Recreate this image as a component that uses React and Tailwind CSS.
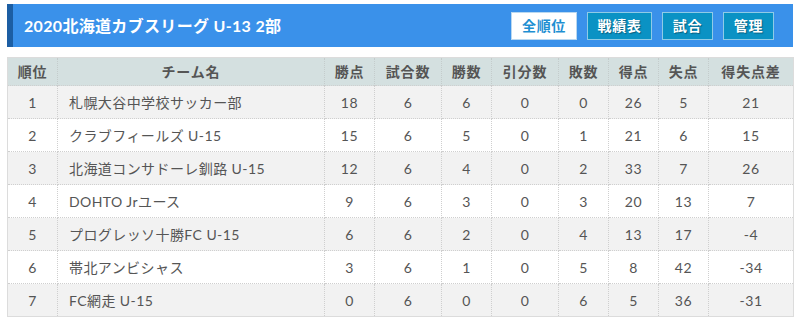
import React from "react";

const rows = [
  [1, "札幌大谷中学校サッカー部", 18, 6, 6, 0, 0, 26, 5, 21],
  [2, "クラブフィールズ U-15", 15, 6, 5, 0, 1, 21, 6, 15],
  [3, "北海道コンサドーレ釧路 U-15", 12, 6, 4, 0, 2, 33, 7, 26],
  [4, "DOHTO Jrユース", 9, 6, 3, 0, 3, 20, 13, 7],
  [5, "プログレッソ十勝FC U-15", 6, 6, 2, 0, 4, 13, 17, -4],
  [6, "帯北アンビシャス", 3, 6, 1, 0, 5, 8, 42, -34],
  [7, "FC網走 U-15", 0, 6, 0, 0, 6, 5, 36, -31],
];

const heads = ["順位", "チーム名", "勝点", "試合数", "勝数", "引分数", "敗数", "得点", "失点", "得失点差"];
const widths = [50, 267, 50, 67, 50, 67, 50, 50, 50, 85];

export default function App() {
  return (
    <div className="w-[800px] h-[325px] bg-white font-[Lato,'Noto_Sans_CJK_JP',sans-serif] pt-[4px]">
      <div className="mx-[7px] h-[43px] bg-[#3a91ea] border-l-[6px] border-[#1c5ea3] flex items-center justify-between pl-[11px] pr-[19px]">
        <div className="text-white font-bold text-[16px] tracking-[0.02em]">2020北海道カブスリーグ U-13 2部</div>
        <div className="flex gap-[10px]">
          <div className="w-[66px] h-[28px] bg-white border border-[#b9d8f0] flex items-center justify-center text-[#1e8fd2] font-bold text-[14px] tracking-[0.05em]">全順位</div>
          <div className="w-[65px] h-[28px] bg-[#0a92c4] border border-[#8fcbe6] flex items-center justify-center text-white font-bold text-[14px] tracking-[0.05em] [text-shadow:1px_1px_1px_rgba(0,0,0,0.35)]">戦績表</div>
          <div className="w-[51px] h-[28px] bg-[#0a92c4] border border-[#8fcbe6] flex items-center justify-center text-white font-bold text-[14px] tracking-[0.05em] [text-shadow:1px_1px_1px_rgba(0,0,0,0.35)]">試合</div>
          <div className="w-[51px] h-[28px] bg-[#0a92c4] border border-[#8fcbe6] flex items-center justify-center text-white font-bold text-[14px] tracking-[0.05em] [text-shadow:1px_1px_1px_rgba(0,0,0,0.35)]">管理</div>
        </div>
      </div>
      <table className="mx-[7px] mt-[10px] w-[786px] table-fixed border-collapse border border-[#dcdcdc] text-[14px] text-[#555]">
        <colgroup>
          {widths.map((w, i) => (
            <col key={i} style={{ width: w }} />
          ))}
        </colgroup>
        <thead>
          <tr className="bg-[#d4e0e0]">
            {heads.map((h, i) => (
              <th key={i} className="h-[28px] p-0 font-bold text-center tracking-[0.06em] border-l border-dotted border-[#c4cccc] first:border-l-0">
                {h}
              </th>
            ))}
          </tr>
        </thead>
        <tbody>
          {rows.map((r, ri) => (
            <tr key={ri} className={ri % 2 === 0 ? "bg-[#f2f2f2]" : "bg-white"}>
              {r.map((c, ci) => (
                <td
                  key={ci}
                  className={
                    "h-[33px] p-0 border border-dotted border-[#cfcfcf] " +
                    (ci === 1 ? "text-left pl-[11px] tracking-[0.03em]" : "text-center tracking-[0.04em]")
                  }
                >
                  {c}
                </td>
              ))}
            </tr>
          ))}
        </tbody>
      </table>
    </div>
  );
}
